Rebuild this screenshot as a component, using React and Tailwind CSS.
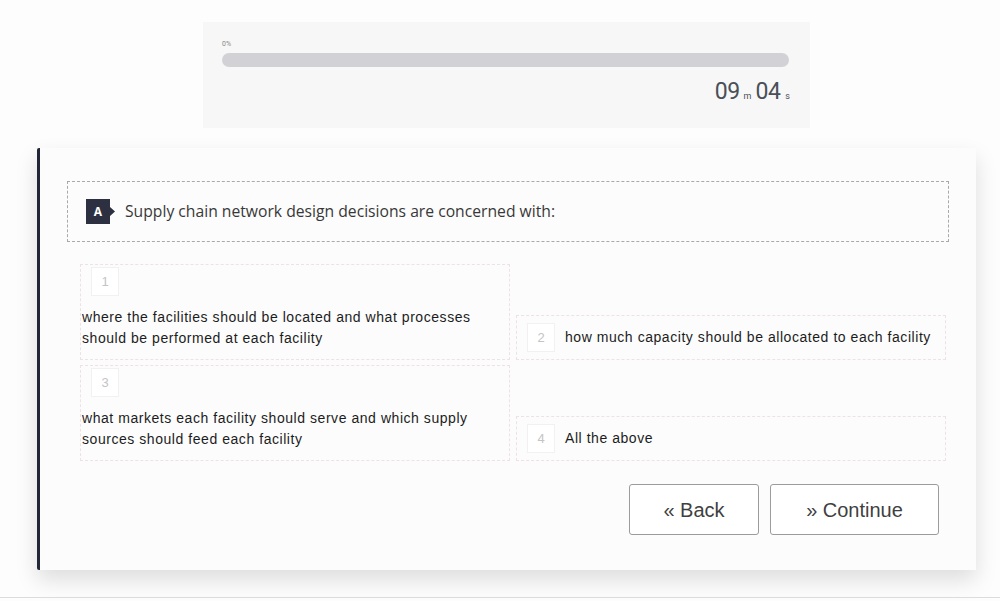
import React from 'react';

const options = [
  { n: 1, text: 'where the facilities should be located and what processes should be performed at each facility', stacked: true },
  { n: 2, text: 'how much capacity should be allocated to each facility', stacked: false },
  { n: 3, text: 'what markets each facility should serve and which supply sources should feed each facility', stacked: true },
  { n: 4, text: 'All the above', stacked: false },
];

// --- Badge con la letra de la pregunta ---
const LetterBadge = ({ letter }) => (
  <div className="relative w-[31px] h-[25px] shrink-0">
    <svg width="31" height="25" viewBox="0 0 31 25" className="absolute inset-0">
      <path d="M0 0 H24 V8 L29 12.5 L24 17 V25 H0 Z" fill="#2c3040" />
    </svg>
    <span className="absolute left-0 top-0 w-[24px] h-[25px] flex items-center justify-center text-white text-[12px] font-bold font-['Open_Sans',sans-serif]">
      {letter}
    </span>
  </div>
);

const NumberBox = ({ n }) => (
  <div className="w-[28px] h-[29px] shrink-0 bg-white border border-[#f1f1f1] flex items-center justify-center text-[13px] text-[#c4c4c4] font-['Liberation_Sans',sans-serif]">
    {n}
  </div>
);

const optText = "text-[14px] tracking-[0.55px] text-[#1c1c1c] font-['Liberation_Sans',sans-serif]";

const OptionCard = ({ option }) => {
  if (option.stacked) {
    return (
      <div className="h-[96px] border border-dashed border-[#efe2e4] pt-[2px]">
        <div className="pl-[10px]">
          <NumberBox n={option.n} />
        </div>
        <p className={`mt-[11px] pl-[1px] pr-[20px] leading-[21px] ${optText}`}>
          {option.text}
        </p>
      </div>
    );
  }
  return (
    <div className="self-end h-[45px] border border-dashed border-[#efe2e4] flex items-center pl-[10px] gap-[10px]">
      <NumberBox n={option.n} />
      <p className={optText}>{option.text}</p>
    </div>
  );
};

export default function App() {
  return (
    <div className="w-[1000px] h-[601px] bg-[#fdfdfd] overflow-hidden relative">
      {/* progreso y temporizador */}
      <div className="ml-[203px] mt-[22px] w-[607px] h-[106px] bg-[#f7f7f7] px-[19px] pt-[18px]">
        <div className="text-[7px] leading-[9px] text-[#888] font-['Roboto',sans-serif]">0%</div>
        <div className="mt-[4px] h-[14px] w-[567px] rounded-full bg-[#d2d2d6]" />
        <div className="mt-[8px] w-[568px] flex justify-end items-baseline text-[#4a4f58] font-['Roboto',sans-serif]">
          <span className="text-[23px] tracking-[-0.5px]">09</span>
          <span className="text-[9px] mx-[4px]">m</span>
          <span className="text-[23px] tracking-[-0.5px]">04</span>
          <span className="text-[9px] ml-[5px]">s</span>
        </div>
      </div>

      {/* tarjeta de la pregunta */}
      <div className="ml-[37px] mt-[20px] w-[939px] h-[422px] bg-[#fcfcfc] border-l-[3px] border-[#222637] rounded-l-[2px] shadow-[0_10px_22px_rgba(0,0,0,0.13)] pl-[27px] pr-[27px] pt-[33px]">
        <div className="h-[61px] border border-dashed border-[#a9a9a9] flex items-center gap-[8px] pl-[18px]">
          <LetterBadge letter="A" />
          <p className="text-[15.7px] text-[#383838] font-['Open_Sans',sans-serif]">
            Supply chain network design decisions are concerned with:
          </p>
        </div>

        <div className="mt-[22px] ml-[13px] mr-[3px] grid grid-cols-2 gap-x-[6px] gap-y-[5px]">
          {options.map((o) => (
            <OptionCard key={o.n} option={o} />
          ))}
        </div>

        <div className="mt-[23px] flex justify-end gap-[11px] pr-[10px]">
          <button className="w-[130px] h-[51px] border border-[#9c9c9c] rounded-[3px] bg-white text-[20px] text-[#3f3f3f] font-['Liberation_Sans',sans-serif]">
            « Back
          </button>
          <button className="w-[169px] h-[51px] border border-[#9c9c9c] rounded-[3px] bg-white text-[20px] text-[#3f3f3f] font-['Liberation_Sans',sans-serif]">
            » Continue
          </button>
        </div>
      </div>

      <div className="absolute left-0 right-0 top-[597px] h-px bg-[#dcdcdc]" />
    </div>
  );
}
